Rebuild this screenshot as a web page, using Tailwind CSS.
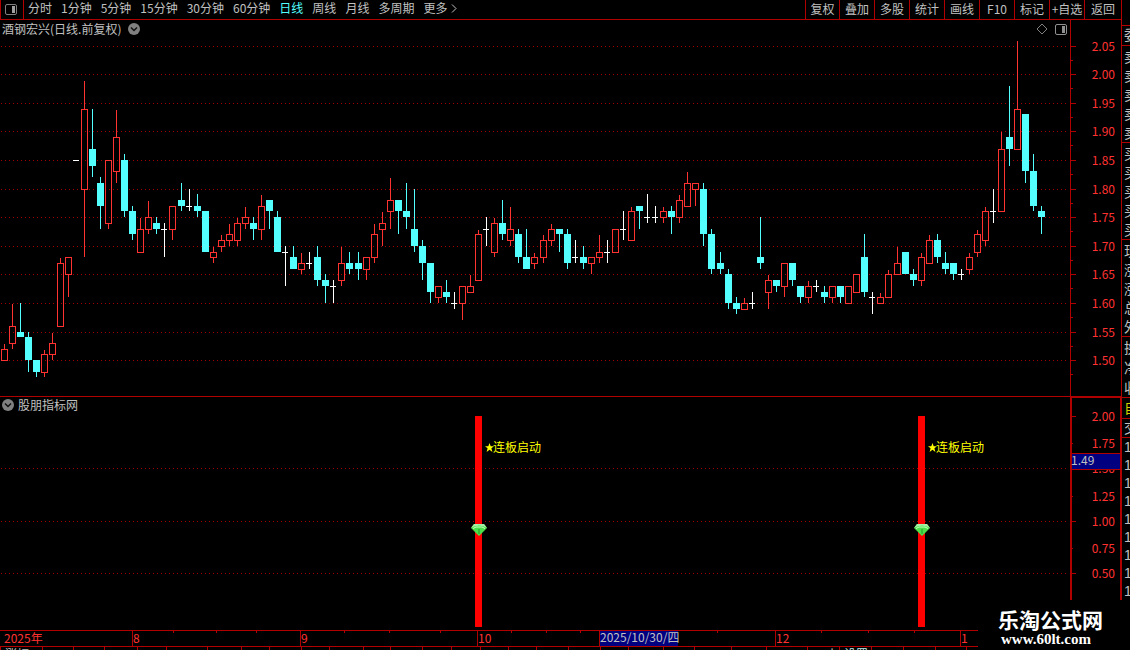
<!DOCTYPE html>
<html lang="zh-CN">
<head>
    <meta charset="UTF-8">
    <title>酒钢宏兴 - 日线</title>
    <script src="https://cdn.jsdelivr.net/npm/@tailwindcss/browser@4"></script>
    <style>
        body {
            font-family: 'Noto Sans CJK SC', 'Liberation Sans', sans-serif;
        }
    </style>
</head>
<body class="relative flex flex-col h-screen overflow-hidden bg-black text-xs text-[#c0c0c0]">

    <div class="flex">
        <main class="flex-1 min-w-0">

            <!-- Toolbar -->
            <header class="flex h-5 border-b border-[#b00000] leading-4 whitespace-nowrap">
                <button class="w-6 pl-1 border-x border-[#b00000]" aria-label="侧栏">
                    <svg class="w-3 h-3" viewBox="0 0 12 12" fill="none">
                        <rect x="0.5" y="0.5" width="11" height="10" rx="1.5" stroke="#808080" />
                        <rect x="7" y="2" width="3" height="7" fill="#a0a0a0" />
                    </svg>
                </button>
                <nav class="flex flex-1 gap-[9px] pl-1">
                    <a href="#">分时</a>
                    <a href="#">1分钟</a>
                    <a href="#">5分钟</a>
                    <a href="#">15分钟</a>
                    <a href="#">30分钟</a>
                    <a href="#">60分钟</a>
                    <a href="#" class="text-[#54ffff]">日线</a>
                    <a href="#">周线</a>
                    <a href="#">月线</a>
                    <a href="#">多周期</a>
                    <a href="#" class="flex gap-1">更多
                        <svg class="w-[6px] h-[9px] mt-1" viewBox="0 0 6 9" fill="none" stroke="currentColor"><path d="M1 0.5l4 4-4 4" /></svg>
                    </a>
                </nav>
                <div class="flex">
                    <button class="w-[34px] pb-[2px] border-l border-[#b00000]">复权</button>
                    <button class="w-[35px] pb-[2px] border-l border-[#b00000]">叠加</button>
                    <button class="w-[35px] pb-[2px] border-l border-[#b00000]">多股</button>
                    <button class="w-[35px] pb-[2px] border-l border-[#b00000]">统计</button>
                    <button class="w-[35px] pb-[2px] border-l border-[#b00000]">画线</button>
                    <button class="w-[35px] pb-[2px] border-l border-[#b00000]">F10</button>
                    <button class="w-[35px] pb-[2px] border-l border-[#b00000]">标记</button>
                    <button class="w-[35px] pb-[2px] border-l border-[#b00000]">+自选</button>
                    <button class="w-[37px] pb-[2px] border-l border-[#b00000]">返回</button>
                </div>
            </header>

            <!-- Price chart -->
            <section class="relative flex h-[377px] border-b border-[#b00000]">
                <svg id="price" class="flex-1 min-w-0 h-[376px]" viewBox="0 20 1070 376" preserveAspectRatio="xMaxYMin slice" shape-rendering="crispEdges"></svg>
                <svg id="priceAxis" class="w-[51px] h-[376px] text-xs" viewBox="1070 20 51 376"></svg>
                <div class="absolute top-0 left-0 right-[54px] flex items-center h-[18px] pl-[2px]">
                    <h1>酒钢宏兴(日线.前复权)</h1>
                    <button class="ml-[7px]" aria-label="展开">
                        <svg class="w-3 h-3" viewBox="0 0 12 12" fill="none">
                            <circle cx="6" cy="6" r="6" fill="#808080" />
                            <path d="M3 4.5l3 3 3-3" stroke="#101010" stroke-width="1.5" />
                        </svg>
                    </button>
                    <svg class="w-3 h-3 ml-auto mr-[7px]" viewBox="0 0 12 12" fill="none"><path d="M6 1l5 5-5 5-5-5z" stroke="#808080" /></svg>
                    <svg class="w-3 h-3" viewBox="0 0 12 12" fill="none">
                        <rect x="0.5" y="1.5" width="11" height="10" rx="1.5" stroke="#909090" />
                        <rect x="7" y="3" width="3" height="7" fill="#909090" />
                    </svg>
                </div>
            </section>

            <!-- Indicator -->
            <section class="relative flex h-[233px]">
                <svg id="signal" class="flex-1 min-w-0 h-[233px] text-xs" viewBox="0 397 1070 233" preserveAspectRatio="xMaxYMin slice"></svg>
                <svg id="signalAxis" class="w-[51px] h-[233px] text-xs" viewBox="1070 397 51 233"></svg>
                <div class="absolute top-0 left-0 flex items-center gap-1 h-4 pl-[2px]">
                    <button aria-label="指标菜单" class="leading-none">
                        <svg class="w-3 h-3" viewBox="0 0 12 12" fill="none">
                            <circle cx="6" cy="6" r="6" fill="#808080" />
                            <path d="M3 4.5l3 3 3-3" stroke="#101010" stroke-width="1.5" />
                        </svg>
                    </button>
                    <h2>股朋指标网</h2>
                </div>
            </section>
        </main>

        <!-- Quote panel, cut off by the window edge -->
        <aside class="w-[9px] h-[630px] overflow-hidden border-l border-[#b00000] text-sm whitespace-nowrap">
            <div class="h-[26px] border-b border-[#b00000]"></div>
            <p class="h-5 pl-[2px] leading-4 border-b border-[#b00000]">委比</p>
            <ul class="flex flex-col justify-around h-[97px] pl-[2px] leading-4 border-b border-[#b00000]">
                <li>卖五</li>
                <li>卖四</li>
                <li>卖三</li>
                <li>卖二</li>
                <li>卖一</li>
            </ul>
            <ul class="flex flex-col justify-around h-[97px] pl-[2px] leading-4 border-b border-[#b00000]">
                <li>买一</li>
                <li>买二</li>
                <li>买三</li>
                <li>买四</li>
                <li>买五</li>
            </ul>
            <ul class="flex flex-col justify-around h-[97px] pl-[2px] leading-4 border-b border-[#b00000]">
                <li>现价</li>
                <li>涨跌</li>
                <li>涨幅</li>
                <li>总量</li>
                <li>外盘</li>
            </ul>
            <ul class="flex flex-col justify-around h-[61px] pl-[2px] leading-4 border-b border-[#b00000]">
                <li>换手</li>
                <li>净资</li>
                <li>收益</li>
            </ul>
            <p class="h-[21px] pl-[2px] leading-[18px] text-[#d0d000] border-b border-[#b00000]">自</p>
            <p class="h-[19px] pl-[2px] leading-4 border-b border-[#b00000]">交</p>
            <ul class="pl-[2px] leading-[18px] font-medium font-['Liberation_Sans']">
                <li>14</li>
                <li>14</li>
                <li>14</li>
                <li>14</li>
                <li>14</li>
                <li>14</li>
                <li>14</li>
                <li>14</li>
                <li>14</li>
            </ul>
        </aside>
    </div>

    <!-- Time axis -->
    <svg id="timeAxis" class="w-full h-5 text-xs" viewBox="0 630 1130 20" preserveAspectRatio="xMinYMin slice"></svg>

    <!-- Site badge -->
    <div class="absolute right-0 bottom-0 w-[152px] h-[50px] pt-[7px] pl-5 bg-black text-white font-bold">
        <p class="text-[21px] leading-6">乐淘公式网</p>
        <a href="#" class="block pl-[3px] text-[15px] leading-4 font-['Liberation_Serif']">www.60lt.com</a>
    </div>

    <script>
        const RED = '#ff3232', CYAN = '#54ffff', WHITE = '#ffffff', LINE = '#b00000';

        // x, kind (r up, c down, w flat), high, body top, body bottom, low
        const candles = [
            [4,'r',344,349,361,361],[12,'r',304,326,344,349],[20,'c',303,332,337,337],[28,'c',332,337,360,372],
            [36,'c',360,360,372,377],[44,'r',350,354,373,377],[52,'r',333,343,355,360],[60,'r',258,263,327,327],
            [68,'r',257,257,275,297],[76,'w',160,160,161,161],[84,'r',81,109,190,257],[92,'c',109,149,166,177],
            [100,'c',177,183,206,229],[108,'r',160,160,224,229],[116,'r',110,137,172,183],[124,'c',154,160,211,217],
            [132,'c',206,211,234,240],[140,'r',218,229,253,253],[148,'r',201,217,230,234],[156,'c',217,223,229,234],
            [164,'w',223,229,230,257],[172,'r',206,206,230,240],[181,'c',183,200,206,211],[189,'w',189,206,207,211],
            [197,'c',194,206,211,217],[205,'c',211,211,252,252],[213,'r',247,252,258,263],[221,'r',235,240,247,252],
            [229,'r',224,234,241,246],[237,'r',218,223,241,246],[245,'r',207,217,224,229],[253,'c',217,223,229,240],
            [261,'r',195,206,230,240],[269,'c',200,200,211,229],[277,'c',211,217,252,252],[285,'w',246,252,253,286],
            [293,'c',246,257,269,269],[301,'r',253,263,270,274],[309,'w',252,263,264,269],[317,'c',246,257,280,286],
            [325,'c',274,280,286,303],[333,'w',280,286,287,303],[341,'r',247,263,281,286],[349,'c',252,263,269,274],
            [358,'c',252,263,269,280],[366,'r',257,257,270,280],[374,'r',224,234,258,263],[382,'r',212,223,230,246],
            [390,'r',178,200,212,229],[398,'c',200,200,211,234],[406,'c',183,211,217,229],[414,'c',189,229,246,252],
            [422,'c',240,246,263,280],[430,'c',263,263,292,303],[438,'r',286,286,298,303],[446,'c',280,292,297,303],
            [454,'w',292,303,304,309],[462,'r',286,286,304,320],[470,'r',275,286,293,293],[478,'r',230,234,281,281],
            [486,'w',217,229,230,246],[494,'r',218,223,253,257],[502,'c',200,223,234,240],[510,'r',207,229,241,246],
            [518,'c',229,234,257,263],[526,'c',229,257,269,269],[534,'r',253,257,264,269],[543,'r',235,240,258,263],
            [551,'r',224,229,241,246],[559,'c',229,229,234,252],[567,'c',229,234,263,269],[575,'w',240,257,258,263],
            [583,'c',246,257,263,269],[591,'r',257,257,264,274],[599,'r',235,252,258,263],[607,'w',240,252,253,263],
            [615,'r',229,229,253,253],[623,'w',211,229,230,240],[631,'r',207,211,241,241],[639,'c',206,206,211,229],
            [647,'w',194,217,218,223],[655,'w',206,217,218,223],[663,'r',207,211,218,223],[671,'c',206,211,217,234],
            [679,'r',195,200,218,223],[687,'r',172,183,207,207],[695,'r',183,183,190,206],[703,'c',183,189,234,246],
            [711,'c',229,234,269,274],[720,'c',252,263,269,274],[728,'c',269,274,303,309],[736,'c',297,303,309,314],
            [744,'r',298,303,310,310],[752,'w',292,303,304,309],[760,'c',217,257,263,269],[768,'r',275,280,293,309],
            [776,'c',280,280,286,292],[784,'r',263,263,287,297],[792,'c',263,263,280,286],[800,'c',286,286,297,303],
            [808,'r',281,286,298,303],[816,'w',280,286,287,292],[824,'c',286,292,297,303],[832,'r',286,286,298,303],
            [840,'c',286,286,297,303],[848,'r',286,286,304,304],[856,'r',274,274,293,293],[864,'c',234,257,292,297],
            [872,'w',292,297,298,314],[880,'r',293,297,304,304],[888,'r',270,274,298,298],[897,'r',247,263,275,275],
            [905,'c',252,252,274,274],[913,'c',269,274,280,286],[921,'r',253,257,281,286],[929,'r',235,240,264,264],
            [937,'c',234,240,257,263],[945,'c',252,263,269,274],[953,'c',263,263,274,280],[961,'w',269,274,275,280],
            [969,'r',253,257,270,274],[977,'r',230,234,253,257],[985,'r',207,211,241,246],[993,'w',189,211,212,223],
            [1001,'r',132,149,212,212],[1009,'c',86,137,149,166],[1017,'r',41,109,150,150],[1025,'c',114,114,171,183],
            [1033,'c',154,171,206,211],[1041,'c',206,211,217,234],
        ];
        const priceTicks = [
            [46,'2.05'],[74,'2.00'],[103,'1.95'],[131,'1.90'],[160,'1.85'],[189,'1.80'],
            [217,'1.75'],[246,'1.70'],[274,'1.65'],[303,'1.60'],[332,'1.55'],[360,'1.50'],
        ];
        const signalTicks = [
            [416,'2.00'],[443,'1.75'],[468,'1.50'],[496,'1.25'],[521,'1.00'],[548,'0.75'],[573,'0.50'],
        ];

        const rect = (x, y, w, h, fill) => h > 0 ? `<rect x="${x}" y="${y}" width="${w}" height="${h}" fill="${fill}" />` : '';
        const text = (x, y, str, fill, anchor = 'start') => `<text x="${x}" y="${y}" fill="${fill}" text-anchor="${anchor}">${str}</text>`;
        const gridLine = y => `<path d="M1 ${y + 0.5}H1067" stroke="#a00000" stroke-dasharray="1 3" shape-rendering="crispEdges" />`;

        function drawCandle([x, kind, high, top, bottom, low]) {
            if (kind === 'w') {
                return rect(x, high, 1, low - high, WHITE) + rect(x - 3, top, 6, 1, WHITE);
            }
            if (kind === 'c') {
                return rect(x, high, 1, low - high, CYAN) + rect(x - 3, top, 7, bottom - top, CYAN);
            }
            return rect(x, high, 1, top - high, RED) + rect(x, bottom, 1, low - bottom, RED)
                + `<rect x="${x - 2.5}" y="${top + 0.5}" width="6" height="${bottom - top - 1}" fill="none" stroke="${RED}" />`;
        }

        function drawSignal(x) {
            return rect(x - 3, 416, 7, 211, '#ff0000') + `
                <path transform="translate(${x - 7} 524)" d="M3 0h10l3 4-8 8-8-8z" fill="#4be04b" />
                <path transform="translate(${x - 7} 524)" d="M3 0h10l3 4-3-1.5-5-1-5 1L0 4z" fill="#a8f0a8" />
                <path transform="translate(${x - 7} 524)" d="M2 4.500l3-1.500h6l3 1.500" fill="none" stroke="#c8ffc0" />
                <path transform="translate(${x - 7} 524)" d="M8 5v5" fill="none" stroke="#229a22" />
                <path transform="translate(${x + 7} 443)" d="M4.500 0l1.200 3.200H9L6.400 5.300 7.400 9 4.500 6.800 1.600 9l1-3.700L0 3.200h3.300z" fill="#ffff00" />`
                + text(x + 15, 452, '连板启动', '#ffff00');
        }

        document.getElementById('price').innerHTML =
            priceTicks.map(t => gridLine(t[0])).join('') + candles.map(drawCandle).join('');

        document.getElementById('priceAxis').innerHTML = rect(1070, 20, 1, 376, LINE)
            + priceTicks.map(([y, label]) => rect(1071, y, 5, 1, LINE)
                + rect(1071, y + 14, 2, 1, LINE)
                + text(1115, y + 5, label, RED, 'end')).join('');

        document.getElementById('signal').innerHTML =
            [468, 521, 573].map(gridLine).join('') + drawSignal(478) + drawSignal(921);

        document.getElementById('signalAxis').innerHTML =
            rect(1070, 397, 2, 233, LINE) + rect(1120, 397, 1, 233, LINE) + rect(1070, 397, 51, 1, LINE)
            + signalTicks.map(([y, label], i) => rect(1072, y, i % 2 ? 1 : 4, 1, LINE)
                + text(1115, y + 5, label, RED, 'end')).join('')
            + rect(1072, 453, 48, 17, LINE) + rect(1072, 454, 48, 15, '#000080')
            + text(1071, 465, '1.49', '#c0c0c0');

        const months = [[132, '8'], [300, '9'], [477, '10'], [775, '12'], [960, '1']];
        const weeks = [173, 216, 256, 344, 389, 440, 511, 546, 580, 717, 821, 868, 914];
        const scroll = [0, 42, 73, 104, 137, 166, 207, 241, 269, 301, 329, 363, 390, 422, 451, 480, 508, 536, 568, 600,
            628, 663, 694, 731, 766, 807, 839, 871, 903, 935, 966];

        document.getElementById('timeAxis').innerHTML = rect(0, 630, 978, 1, LINE) + rect(0, 646, 978, 1, LINE)
            + months.map(([x, label]) => rect(x, 631, 1, 15, LINE) + text(x + 1, 643, label, RED)).join('')
            + weeks.map(x => rect(x, 631, 1, 2, LINE)).join('')
            + scroll.map(x => rect(x, 647, 1, 3, LINE)).join('')
            + text(4, 643, '2025年', RED)
            + rect(599, 631, 79, 15, '#000080') + rect(599, 631, 1, 15, LINE)
            + text(600, 642, '2025/10/30/四', '#c0c0c0')
            + text(5, 659, '涨幅', '#c0c0c0') + text(826, 659, '小', '#c0c0c0') + text(844, 659, '设置', '#c0f0f0');
    </script>
</body>
</html>
